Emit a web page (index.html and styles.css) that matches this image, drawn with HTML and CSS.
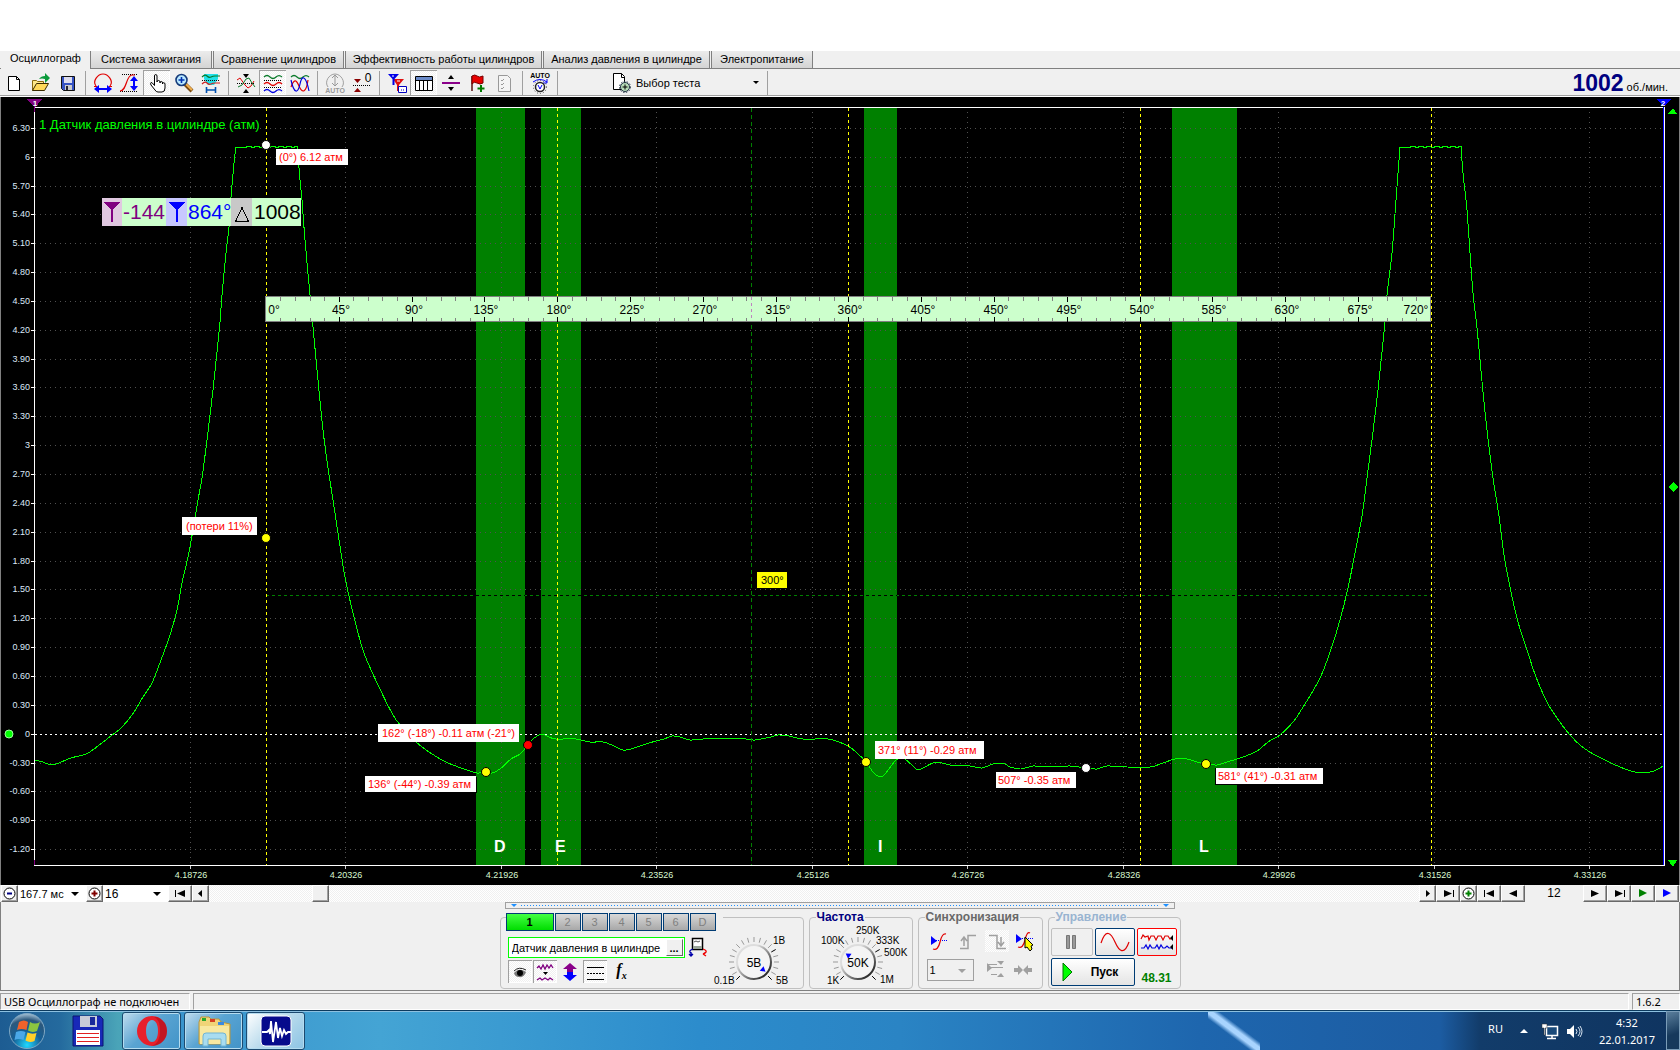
FILE: index.html
```html
<!DOCTYPE html>
<html lang="ru">
<head>
<meta charset="utf-8">
<title>USB Осциллограф</title>
<link rel="stylesheet" href="styles.css">
</head>
<body>
<div class="desktop-gap"></div>
<main class="window">
  <nav class="tabs">
    <button class="tab active" type="button">Осциллограф</button>
    <button class="tab w2" type="button">Система зажигания</button>
    <button class="tab w3" type="button">Сравнение цилиндров</button>
    <button class="tab w4" type="button">Эффективность работы цилиндров</button>
    <button class="tab w5" type="button">Анализ давления в цилиндре</button>
    <button class="tab w6" type="button">Электропитание</button>
  </nav>

  <div class="toolbar">
    <button type="button" aria-label="Новый"><svg viewBox="0 0 22 22"><path d="M5.500 4.500h8l3 3v11h-11z" fill="#fff" stroke="#000"/><path d="M13.500 4.500v3h3" fill="none" stroke="#000"/></svg></button>
    <button type="button" aria-label="Открыть"><svg viewBox="0 0 22 22"><path d="M2.500 18.500v-10h4l1 1h6v3" fill="#ffe98a" stroke="#8a6a10"/><path d="M2.500 18.500l4-7h12l-4 7z" fill="#ffd95a" stroke="#3a2a00"/><path d="M9 7q2-3 6-3V1l5 5-5 5V7q-3-1-6 0z" fill="#0a9a3a"/></svg></button>
    <button type="button" aria-label="Сохранить"><svg viewBox="0 0 22 22"><path d="M4.500 4.500h13v14h-11l-2-2z" fill="#3552c4" stroke="#111"/><path d="M7 5h8v6H7z" fill="#dde"/><path d="M8 13h7v5H8z" fill="#ccc"/><path d="M9 14h2v4H9z" fill="#223"/></svg></button>
    <i class="sep"></i>
    <button type="button" aria-label="Растянуть по горизонтали"><svg viewBox="0 0 22 22"><path d="M4 14C0 9 6 2 11 2s11 7 7 12M2 14.500h3m12 0h3" fill="none" stroke="#e00000" stroke-width="1.200"/><path d="M2 17l5-4v3h8v-3l5 4-5 4v-3H7v3z" fill="#0000ff"/></svg></button>
    <button type="button" aria-label="Растянуть по вертикали"><svg viewBox="0 0 22 22"><path d="M3 2.500h16M1 19.500h17" stroke="#000" stroke-dasharray="1 1"/><path d="M1 19c7 0 6-16 12-16h3" fill="none" stroke="#e00000" stroke-width="1.200"/><path d="M15 4l4 5h-3v5h3l-4 5-4-5h3V9h-3z" fill="#0000ff"/></svg></button>
    <button class="pressed" type="button" aria-label="Рука"><svg viewBox="0 0 22 22"><path d="M8.500 13.500V4q0-1.500 1.200-1.500T11 4v6q0-1.500 1.500-1.500T14 10v1q0-1.500 1.300-1.500T16.500 11v1q0-1.300 1.200-1.300T19 12v4q0 4-3 4h-4q-2 0-3-2l-4-5q-1-2 0-2.500t3.500 3z" fill="#fff" stroke="#000"/></svg></button>
    <button type="button" aria-label="Лупа"><svg viewBox="0 0 22 22"><path d="M12 12l7 7" stroke="#7a4a10" stroke-width="4"/><path d="M13 12l6 6" stroke="#f0b050" stroke-width="2"/><circle cx="8.500" cy="8" r="5.500" fill="#b8e8ff" stroke="#153a7a" stroke-width="1.600"/><path d="M5.500 8h6m-3-3v6" stroke="#0030b0" stroke-width="1.600"/></svg></button>
    <button type="button" aria-label="Интервал"><svg viewBox="0 0 22 22"><path d="M4 2h14v5l-4 6H8L4 7z" fill="#20e0e8"/><path d="M2 5q3-3 5-1t4 1 4-1 5 0" fill="none" stroke="#0a7a2a" stroke-width="1.200"/><path d="M2 8.500h18" stroke="#111" stroke-dasharray="1 1"/><path d="M2 12q3-3 5-1t4 1 4-1 5 0" fill="none" stroke="#d02020" stroke-width="1.200"/><path d="M6.500 15v6m9-6v6M7 18h8" stroke="#0050b0" stroke-width="1.600"/></svg></button>
    <i class="sep"></i>
    <button type="button" aria-label="Совместить"><svg viewBox="0 0 22 22"><path d="M2 11.500h18" stroke="#000" stroke-dasharray="1 1"/><path d="M2 8l3-2 5 7 3 3 3-2 3-5" fill="none" stroke="#e00000"/><path d="M3 15l4-2 4-6 3-1 3 5 3 4" fill="none" stroke="#0a7a2a"/><path d="M8 2h6l-3 4zM8 21h6l-3-4z"/></svg></button>
    <button class="pressed" type="button" aria-label="Раздельно"><svg viewBox="0 0 22 22"><g fill="none" stroke-width="1.200"><path d="M2 5q3-3 6 0t6 0 6 0" stroke="#0a7a2a"/><path d="M2 8.500h18M2 15.500h18" stroke="#000" stroke-width="1" stroke-dasharray="1 1"/><path d="M2 12q3-3 6 0t6 0 6 0" stroke="#e00000"/><path d="M2 19q3-3 6 0t6 0 6 0" stroke="#0000e0"/></g></svg></button>
    <button type="button" aria-label="Наложить"><svg viewBox="0 0 22 22"><g fill="none" stroke-width="1.200"><path d="M2 5q3-3 6 0t6 0 6 0" stroke="#0a7a2a"/><path d="M2 15C5 7 7 7 10 14s7 8 9-6" stroke="#e00000"/><path d="M2 8c3 14 7 14 9 4s6-8 9 7" stroke="#0000e0"/></g></svg></button>
    <i class="sep"></i>
    <button type="button" aria-label="Авто амплитуда"><svg viewBox="0 0 22 22"><path d="M4 15C0 10 5 2 11 2s11 8 7 13" fill="none" stroke="#a0a0a0"/><path d="M11 3v10M8 6l3-3 3 3M8 11l3 3 3-3" fill="none" stroke="#999"/><text x="11" y="21" class="tiny grey">AUTO</text></svg></button>
    <button type="button" aria-label="Ноль"><svg viewBox="0 0 22 22"><path d="M2 13.500h18" stroke="#000" stroke-dasharray="1 1"/><path d="M3 7h7l-3.500 4zM3 20h7l-3.500-4z" fill="#8a0000"/><text x="17" y="10" class="zero">0</text></svg></button>
    <i class="sep"></i>
    <button type="button" aria-label="Маркеры"><svg viewBox="0 0 22 22"><path d="M7 7h11l-5 6v6h-2v-6z" fill="#e01010"/><path d="M2 2h11L8.500 7v6h-2V7z" fill="#0000e8"/><path d="M12.500 14.500h8v6h-8z" fill="#fff" stroke="#0000c0"/><path d="M6 4h2M11 9h3" stroke="#fff"/><path d="M15 18h1m1 0h1" stroke="#0000c0"/></svg></button>
    <button class="pressed" type="button" aria-label="Таблица"><svg viewBox="0 0 22 22"><path d="M2.500 4.500h17v14h-17z" fill="#fff" stroke="#000"/><path d="M3 5h16v3H3z" fill="#6a8ac8"/><path d="M3 8.500h16M6.500 8v10m4-10v10m4-10v10" stroke="#000"/></svg></button>
    <button type="button" aria-label="Разделить"><svg viewBox="0 0 22 22"><path d="M2 11h18" stroke="#8a008a" stroke-width="2"/><path d="M8 7h6l-3-4zM8 15h6l-3 4z"/></svg></button>
    <button type="button" aria-label="Флаг"><svg viewBox="0 0 22 22"><path d="M5 4v15" stroke="#5a1010" stroke-width="1.500"/><path d="M5 4q3-2 5 0t6 0v7q-3 2-6 0t-5 1z" fill="#e80000" stroke="#700"/><path d="M14 13v7m-3.500-3.500h7" stroke="#007a00" stroke-width="2"/></svg></button>
    <button type="button" aria-label="Отчёт"><svg viewBox="0 0 22 22"><path d="M4.500 3.500h9l3 3v13h-12z" fill="#f4f4f4" stroke="#999"/><path d="M7 8l1 1 2-2M7 12l1 1 2-2M7 16l1 1 2-2" fill="none" stroke="#999"/></svg></button>
    <i class="sep"></i>
    <button type="button" aria-label="Авто напряжение"><svg viewBox="0 0 22 22"><text x="11" y="6" class="tiny">AUTO</text><path d="M4 10q7-5 14 0" fill="none" stroke="#0000ff"/><path d="M18 7v4h-4" fill="none" stroke="#0000ff"/><circle cx="11" cy="15" r="4.500" fill="#fff" stroke="#222" stroke-width="1.500"/><circle cx="11" cy="15" r="6.500" fill="none" stroke="#555" stroke-dasharray="1 2"/><path d="M9 13l2 4 2-4" fill="none" stroke="#0000ff"/></svg></button>
    <i class="sep"></i>
    <button class="test-picker" type="button"><svg viewBox="0 0 22 22"><path d="M3.500 1.500h8l3 3v13h-11z" fill="#fff" stroke="#000"/><path d="M11.500 1.500v4h3" fill="none" stroke="#000"/><circle cx="15" cy="15" r="4.500" fill="#b8dcb8" stroke="#234"/><circle cx="15" cy="15" r="5.500" fill="none" stroke="#234" stroke-dasharray="1.500 1.500"/><path d="M12.500 15h5M15 12.500v5" stroke="#000"/></svg><span>Выбор теста</span><i class="caret"></i></button>
    <i class="sep"></i>
    <p class="rpm"><strong>1002</strong> об./мин.</p>
  </div>

  <svg class="scope" id="scope" viewBox="1 97 1678 788">
    <rect x="1" y="97" width="1678" height="788" fill="#000"/>
    <g fill="#008000"><path d="M476 108h49v757h-49zM541 108h40v757h-40zM864 108h33v757h-33zM1172 108h65v757h-65z"/></g>
    <g id="grid"></g>
    <text class="chan" x="39" y="129">1 Датчик давления в цилиндре (атм)</text>
    <path d="M35 734.500H1663" stroke="#fff" stroke-dasharray="2 3"/>
    <path d="M266 595.500H1431" stroke="#008000" stroke-dasharray="3 3"/>
    <path d="M476 595.500h49M542 595.500h39M866 595.500h31M1172 595.500h65" stroke="#000" stroke-dasharray="3 3"/>
    <path class="wave" id="wave"/>
    <path d="M751.500 108V865" stroke="#008000" stroke-dasharray="4 3"/>
    <path d="M266.500 108V865M557.500 108V865M848.500 108V865M1140.500 108V865M1431.500 108V865" stroke="#ff0" stroke-dasharray="3 3"/>
    <g id="ruler"></g>

    <path d="M34 107.500H1665M34 865.500H1665M1664.500 107V866M34.500 107V866" stroke="#fff"/>
    <path d="M1663.500 107V865" stroke="#00f"/>
    <path d="M34.500 105V112M34.500 860V865" stroke="#800080"/>
    <path d="M27 99h15l-7 9z" fill="#800080"/>
    <path d="M1656 99h15l-7 8z" fill="#00f"/>
    <text class="mark" x="35" y="106">1</text>
    <text class="mark" x="1663" y="106">2</text>
    <path d="M1668 114h9l-4-6zM1668 860h9l-4 7zM1668 487l5-5 5 5-5 5z" fill="#0f0"/>
    <circle cx="9" cy="734" r="4" fill="#0f0" stroke="#9f9" stroke-width="1"/>

    <g class="phase"><text x="494" y="852">D</text><text x="555" y="852">E</text><text x="878" y="852">I</text><text x="1199" y="852">L</text></g>

    <g stroke="#000">
      <circle cx="266" cy="145" r="4.500" fill="#fff"/><circle cx="266" cy="538" r="4.500" fill="#ff0"/>
      <circle cx="486" cy="772" r="4.500" fill="#ff0"/><circle cx="528" cy="745" r="4.500" fill="#f00"/>
      <circle cx="866" cy="762" r="4.500" fill="#ff0"/><circle cx="1086" cy="768" r="4.500" fill="#fff"/>
      <circle cx="1206" cy="764" r="4.500" fill="#ff0"/>
    </g>
    <path d="M276 149h72v16h-72zM182 517h75v18h-75zM378 724h141v18H378zM365 776h111v16H365zM875 741h109v18H875zM996 772h80v16h-80zM1216 768h107v16h-107z" fill="#fff"/>
    <path d="M365 792.500h111.500v-16M1215.500 768v16.500H1237" stroke="#000" fill="none"/>
    <g class="note">
      <text x="279" y="161">(0°) 6.12 атм</text><text x="186" y="530">(потери 11%)</text>
      <text x="382" y="737">162° (-18°) -0.11 атм (-21°)</text><text x="368" y="788">136° (-44°) -0.39 атм</text>
      <text x="878" y="754">371° (11°) -0.29 атм</text><text x="998" y="784">507° -0.35 атм</text>
      <text x="1218" y="780">581° (41°) -0.31 атм</text>
    </g>
    <path d="M756.500 571.500h31v17h-31z" fill="#ff0" stroke="#000"/>
    <text class="angle" x="761" y="584">300°</text>

    <path d="M122 198h44v28h-44zM187 198h44v28h-44zM252 198h49v28h-49z" fill="#ccffcc"/>
    <path d="M102 198h20v28h-20z" fill="#e0c8e0"/><path d="M166 198h21v28h-21z" fill="#c8c8ff"/>
    <path d="M104 202h16l-7 8v12h-2v-12z" fill="#800080"/><path d="M169 202h16l-7 8v12h-2v-12z" fill="#00f"/>
    <g class="readout"><text x="123" y="219" fill="#800080">-144</text><text x="188" y="219" fill="#00f">864°</text><text x="254" y="219">1008</text></g>
    <path d="M231 198h21v28h-21z" fill="#c8c8c8"/>
    <path d="M235.500 221.500h13l-6.500-14z" fill="none" stroke="#000"/>
  </svg>

  <div class="transport">
    <button type="button" class="b17" aria-label="Уменьшить"><svg viewBox="0 0 15 15"><circle cx="7.500" cy="7.500" r="5.500" fill="#fff" stroke="#000"/><path d="M5 7.500h5" stroke="#000080" stroke-width="2"/></svg></button>
    <label class="combo c68"><select aria-label="Развёртка"><option>167.7 мс</option></select></label>
    <button type="button" class="b17" aria-label="Увеличить"><svg viewBox="0 0 15 15"><circle cx="7.500" cy="7.500" r="5.500" fill="#fff" stroke="#000"/><path d="M4.500 7.500h6m-3-3v6" stroke="#800000" stroke-width="2"/></svg></button>
    <label class="combo c65"><select aria-label="Масштаб"><option>16</option></select></label>
    <button type="button" class="b24" aria-label="В начало"><svg viewBox="0 0 15 15"><path d="M2.500 4v7" stroke="#000"/><path d="M12 4v7L4 7.500z"/></svg></button>
    <button type="button" class="b17" aria-label="Влево"><svg viewBox="0 0 15 15"><path d="M9 4v7L5 7.500z"/></svg></button>
    <input class="scroll" type="range" min="0" max="1000" value="86" aria-label="Позиция">
    <button type="button" class="b17" aria-label="Вправо"><svg viewBox="0 0 15 15"><path d="M6 4v7l4-3.500z"/></svg></button>
    <button type="button" class="b24" aria-label="В конец"><svg viewBox="0 0 15 15"><path d="M12.500 4v7" stroke="#000"/><path d="M3 4v7l8-3.500z"/></svg></button>
    <button type="button" class="b17" aria-label="Добавить"><svg viewBox="0 0 15 15"><circle cx="7.500" cy="7.500" r="5.500" fill="#fff" stroke="#000"/><path d="M4.500 7.500h6m-3-3v6" stroke="#008000" stroke-width="2"/></svg></button>
    <button type="button" class="b24" aria-label="Первый"><svg viewBox="0 0 15 15"><path d="M2.500 4v7" stroke="#000"/><path d="M12 4v7L4 7.500z"/></svg></button>
    <button type="button" class="b24" aria-label="Назад"><svg viewBox="0 0 15 15"><path d="M11 4v7L3 7.500z"/></svg></button>
    <output class="frame">12</output>
    <button type="button" class="b24" aria-label="Вперёд"><svg viewBox="0 0 15 15"><path d="M3 4v7l8-3.500z"/></svg></button>
    <button type="button" class="b24" aria-label="Последний"><svg viewBox="0 0 15 15"><path d="M12.500 4v7" stroke="#000"/><path d="M3 4v7l8-3.500z"/></svg></button>
    <button type="button" class="b24" aria-label="Играть"><svg viewBox="0 0 15 15"><path d="M3 3v8l8-4z" fill="#008000"/></svg></button>
    <button type="button" class="b24" aria-label="Играть циклом"><svg viewBox="0 0 15 15"><path d="M3 3v8l8-4z" fill="#00f"/></svg></button>
  </div>

  <section class="panel">
    <div class="splitter"><i></i><b></b><i></i></div>
    <div class="groups">
      <fieldset class="group channels">
        <div class="chan-tabs">
          <button type="button" class="on">1</button><button type="button">2</button><button type="button">3</button><button type="button">4</button><button type="button">5</button><button type="button">6</button><button type="button">D</button>
        </div>
        <div class="chan-body">
          <div class="chan-left">
            <div class="name-row">
              <div class="name-box"><input type="text" value="Датчик давления в цилиндре" aria-label="Имя канала"><button type="button">...</button></div>
              <svg class="probe" viewBox="0 0 20 20"><path d="M4.500 1.500h10v11h-10z" fill="#fff" stroke="#000" stroke-width="1.500"/><path d="M5 9h9v3H5z" fill="#9aa59a"/><path d="M6 5l2-1 2 1 2-1" fill="none" stroke="#555"/><path d="M5 12q-6 2-1 5m-1-2v4m-2-2l2 2 2-2" fill="none" stroke="#00a" stroke-width="1.300"/><path d="M15 12q6 2 1 5m-1 0l3-2m-3 2l3 2" fill="none" stroke="#e00" stroke-width="1.300"/></svg>
            </div>
            <div class="tool-row">
              <button type="button" class="pressed" aria-label="Показать"><svg viewBox="0 0 24 22"><path d="M6 12q5-6 12-1-2 6-7 5-4 0-5-4z" fill="#777"/><circle cx="12" cy="12" r="3" fill="#000"/><path d="M6 10q5-5 12-1" fill="none" stroke="#222"/></svg></button>
              <button type="button" class="pressed" aria-label="Фильтр"><svg viewBox="0 0 24 22"><path d="M4 7l2-2 2 3 2-4 2 4 2-4 2 3 2-3 2 3M4 19l3-2 2 2 3-2 3 2 2-2 3 2" fill="none" stroke="#800080" stroke-width="1.300"/><path d="M10 11h5l-2.500 3z"/></svg></button>
              <button type="button" aria-label="Сдвиг"><svg viewBox="0 0 24 22"><path d="M12 2l7 6h-4v3H9V8H5z" fill="#8a008a"/><path d="M12 20l7-6h-4v-3H9v3H5z" fill="#00f"/></svg></button>
              <button type="button" class="pressed" aria-label="Уровни"><svg viewBox="0 0 24 22"><path d="M4 6.500h17M4 18.500h17" stroke="#000"/><path d="M4 12.500h17" stroke="#000" stroke-dasharray="2 1"/></svg></button>
              <button type="button" class="fx">f<sub>x</sub></button>
            </div>
          </div>
          <svg class="knob k1" data-v="5В" data-a="40" viewBox="-43 -29 80 55"><g class="ticks"></g><text x="19" y="-18">1В</text><text x="-40" y="22">0.1В</text><text x="22" y="22">5В</text></svg>
        </div>
      </fieldset>
      <fieldset class="group freq">
        <legend>Частота</legend>
        <svg class="knob k2" data-v="50K" data-a="215" viewBox="-44 -39 94 65"><g class="ticks"></g><text x="-2" y="-28">250K</text><text x="-37" y="-18">100K</text><text x="18" y="-18">333K</text><text x="26" y="-6">500K</text><text x="-31" y="22">1K</text><text x="22" y="21">1M</text></svg>
      </fieldset>
      <fieldset class="group sync">
        <legend>Синхронизация</legend>
        <div class="sync-row">
          <svg viewBox="0 0 24 22"><path d="M4 6v9l6-4z" fill="#00f"/><path d="M5 10.500h16" stroke="#00f" stroke-dasharray="1 1"/><path d="M6 19q5 2 7-7t6-8" fill="none" stroke="#e00000" stroke-width="1.200"/></svg>
          <svg viewBox="0 0 24 22"><path d="M4 18.500h8v-13h8M8 16V8M5 11l3-4 3 4" fill="none" stroke="#a0a0a0" stroke-width="1.500"/></svg>
          <svg class="hatch" viewBox="0 0 24 22"><path d="M4 5.500h8v13h9M16 7v8M13 12l3 4 3-4" fill="none" stroke="#a0a0a0" stroke-width="1.500"/></svg>
          <svg viewBox="0 0 24 22"><path d="M2 4v9l6-4z" fill="#00f"/><path d="M2 8.500h18" stroke="#00f" stroke-dasharray="1 1"/><path d="M4 17q5 2 7-7t5-7" fill="none" stroke="#e00000" stroke-width="1.200"/><path d="M11 7v11l2-1 3 4 2-2-1-3 2-1z" fill="#ff0" stroke="#000"/></svg>
        </div>
        <div class="sync-row two">
          <label class="combo sel"><select aria-label="Канал синхронизации"><option>1</option></select></label>
          <svg viewBox="0 0 24 22"><path d="M4 4v9l5-4zM14 2h7l-3 4zM14 18h7l-3-4z" fill="#a0a0a0"/><path d="M4 5.500h10M8 8.500h12M8 15.500h6" stroke="#a0a0a0"/></svg>
          <svg viewBox="0 0 24 22"><path d="M3 9h4V6l5 5-5 5v-3H3zM21 9h-4V6l-5 5 5 5v-3h4z" fill="#a0a0a0"/></svg>
        </div>
      </fieldset>
      <fieldset class="group control">
        <legend>Управление</legend>
        <div class="ctl-grid">
          <button type="button" class="off" aria-label="Пауза"><svg viewBox="0 0 38 26"><path d="M13.500 6.500h3v13h-3zM19.500 6.500h3v13h-3z" fill="#999" stroke="#777"/></svg></button>
          <button type="button" aria-label="Синус"><svg viewBox="0 0 38 26"><path d="M5 14C10-1 15 4 19 13s9 14 14 0" fill="none" stroke="#e00000" stroke-width="1.200"/></svg></button>
          <button type="button" class="red" aria-label="Осциллограмма"><svg viewBox="0 0 38 26"><path d="M3 10l2-4 2 2 3-1 1 4 2-4h3l2 4 2-4h3l2 4 2-4h3l2 3 3-1" fill="none" stroke="#e00000" stroke-width="1.200"/><path d="M3 19h3l2-3 2 4 2-4 2 3h3l2-3 2 4 2-4 2 3h2l2-2 2 2h3" fill="none" stroke="#0000e0" stroke-width="1.200"/><path d="M35 6v6l-3-3zM35 15v6l-3-3z"/></svg></button>
          <button type="button" class="start"><svg viewBox="0 0 14 20"><path d="M2 1v18l9-9z" fill="#0f0" stroke="#070"/></svg>Пуск</button>
          <output>48.31</output>
        </div>
      </fieldset>
    </div>
  </section>
  <footer class="status"><span class="s1">USB Осциллограф не подключен</span><span class="s2"></span><span class="s3">1.6.2</span></footer>
</main>

<div class="taskbar">
  <button type="button" class="orb" aria-label="Пуск"><svg viewBox="0 0 40 38"><defs><radialGradient id="orb" cx=".5" cy=".9" r=".9"><stop offset="0" stop-color="#1fd8ff"/><stop offset=".45" stop-color="#155f96"/><stop offset=".8" stop-color="#2c587c"/><stop offset="1" stop-color="#a8c4d8"/></radialGradient></defs><circle cx="20" cy="19" r="17.500" fill="url(#orb)" stroke="#7fa8c4"/><path d="M12 10q5-3 9 0l-1.500 8q-5-2-9.500 0z" fill="#f0622a"/><path d="M23 10q5 3 10 0l-3 9q-5 2-9-.5z" fill="#8cc63f"/><path d="M9 20q5-2 9.500 0l-2 8q-5-2-9 0z" fill="#4aa8e8"/><path d="M20.500 20.500q4 2 9 .5l-2 8q-5 2-9-.5z" fill="#ffd02a"/></svg></button>
  <button type="button" class="tc" aria-label="Total Commander"><svg viewBox="0 0 34 34"><path d="M2 2h27l3 3v27H2z" fill="#1828b8" stroke="#0a1470"/><path d="M9 2h17v11H9z" fill="#c8ccd8"/><path d="M19 3h5v8h-5z" fill="#1a2a9a"/><path d="M5 16h24v15H5z" fill="#fff"/><path d="M6 19.500h22M6 23.500h22M6 27.500h22" stroke="#e02020"/></svg></button>
  <button type="button" class="task" aria-label="Opera"><svg viewBox="0 0 34 34"><path d="M17 2a15 15 0 1 0 0 30 15 15 0 0 0 0-30zm0 4c4 0 6 5 6 11s-2 11-6 11-6-5-6-11 2-11 6-11z" fill="#e8202c" fill-rule="evenodd"/><path d="M22 3q10 4 10 14t-10 14q-3 1-5 1 8-3 8-15T19 3z" fill="#a8101c" opacity=".6"/></svg></button>
  <button type="button" class="task" aria-label="Проводник"><svg viewBox="0 0 34 34"><path d="M2 8l2-5h8l2 2h8l2 3 9 2v20H2z" fill="#f0d478" stroke="#b8963c"/><path d="M5 4h4v3H5z" fill="#2aa82a"/><path d="M13 5h5v3h-5z" fill="#d84020"/><path d="M21 8h6v3h-6z" fill="#3a8ae0"/><path d="M3 12h29v18H3z" fill="#f8e8a0"/><path d="M6 32V22q0-3 3-3h17q3 0 3 3v10h-5v-7H11v7z" fill="#a8dcf0" stroke="#70b4d4"/></svg></button>
  <button type="button" class="task live" aria-label="Осциллограф"><svg viewBox="0 0 34 34"><rect x="2" y="2" width="30" height="30" rx="4" fill="#060a8c" stroke="#fff"/><path d="M3 18h5l2-2 1 4 1-13 2 21 3-20 2 16 2-10 2 8 2-6 2 4 2-2h3" fill="none" stroke="#fff" stroke-width="1.800"/></svg></button>
  <div class="tray">
    <span class="lang">RU</span>
    <svg class="t-up" viewBox="0 0 10 6"><path d="M1 5h8L5 1z" fill="#fff"/></svg>
    <svg class="t-ic" viewBox="0 0 18 18"><path d="M5.500 4.500h11v9h-11z" fill="#1a4a7a" stroke="#fff" stroke-width="1.500"/><path d="M6 16.500h9M11 14v2" stroke="#fff" stroke-width="1.500"/><path d="M1 2h5v4H4v7H3V6H1z" fill="#fff" stroke="#333" stroke-width=".5"/></svg>
    <svg class="t-ic" viewBox="0 0 18 18"><path d="M2 7h3l4-4v13l-4-4H2z" fill="#fff"/><path d="M11 7q2 2.500 0 5M13 5q4 4.500 0 9M15 4q4 5.500 0 11" fill="none" stroke="#dde8f4"/></svg>
    <time class="clock">4:32<br>22.01.2017</time>
    <button type="button" class="show" aria-label="Рабочий стол"></button>
  </div>
</div>
<script src="scope.js"></script>
</body>
</html>
```
FILE: styles.css
```css
* { box-sizing: border-box; }
body {
  margin: 0;
  height: 100vh;
  display: flex;
  flex-direction: column;
  background: #fff;
  font: 11px/16px "Liberation Sans", Arial, sans-serif;
  color: #000;
}
button, input, select { font: inherit; color: inherit; margin: 0; padding: 0; border: 0; background: none; }
svg { display: block; }
text { font-family: "Liberation Sans", Arial, sans-serif; }
.desktop-gap { flex: 0 0 51px; }
.window { flex: 1; min-height: 0; display: flex; flex-direction: column; background: #f0f0f0; }

/* page tabs */
.tabs { display: flex; height: 18px; padding-left: 1px; border-bottom: 1px solid #808080; }
.tab {
  height: 17px;
  line-height: 14px;
  padding-bottom: 2px;
  white-space: nowrap;
  background: linear-gradient(#ececec, #d4d4d4);
  border-right: 1px solid #808080;
  margin-right: 1px;
}
.tab + .tab + .tab { border-left: 1px solid #808080; }
.tab.active { width: 90px; height: 18px; background: #f0f0f0; margin: 0; padding-bottom: 4px; }
.w2 { width: 121px; }
.w3 { width: 131px; }
.w4 { width: 197px; }
.w5 { width: 167px; }
.w6 { width: 102px; }

/* toolbar */
.toolbar { display: flex; height: 28px; padding: 1px 0 0; border-bottom: 1px solid #fff; box-shadow: inset 0 -1px #a0a0a0; }
.toolbar button { width: 27px; height: 25px; display: flex; align-items: center; justify-content: center; }
.toolbar svg { width: 22px; height: 22px; }
.pressed, .toolbar .pressed {
  background: repeating-conic-gradient(#fff 0 25%, #f0f0f0 0 50%) 0 0 / 2px 2px;
  box-shadow: inset 1px 1px #a0a0a0, inset -1px -1px #fff;
}
.hatch { background: repeating-conic-gradient(#fff 0 25%, #f0f0f0 0 50%) 0 0 / 2px 2px; }
.sep { width: 8px; margin: 1px 0; background: linear-gradient(#a0a0a0, #a0a0a0) 4px 0 / 1px 100% no-repeat; }
.tiny { font-size: 7px; font-weight: bold; text-anchor: middle; }
.grey { fill: #999; }
.zero { font-size: 12px; text-anchor: middle; }
.toolbar .test-picker { width: 202px; justify-content: flex-start; padding-left: 49px; gap: 4px; }
.test-picker span { flex: 1; text-align: left; }
.caret { border: 3px solid transparent; border-top: 3px solid #000; border-bottom: 0; margin-right: 4px; }
.rpm { margin: 0 12px 0 auto; line-height: 26px; }
.rpm strong { font-size: 23px; color: #000080; }

/* oscillogram */
.scope { flex: 1 1 0; min-height: 0; width: 100%; background: #000; border: 0 solid #808080; border-width: 0 1px; shape-rendering: crispEdges; }
.scope circle { shape-rendering: auto; }
.wave { fill: none; stroke: #0f0; }
.chan { font-size: 13px; fill: #0f0; }
.mark { font-size: 8px; font-weight: bold; fill: #fff; text-anchor: middle; }
.phase { font-size: 16px; font-weight: bold; fill: #fff; }
.note { font-size: 11px; fill: #f00; }
.angle { font-size: 11px; }
.readout { font-size: 21px; }
.ylab { font-size: 9px; fill: #dce8f8; text-anchor: end; }
.xlab { font-size: 9px; fill: #d8f8d0; text-anchor: middle; }
.deg { font-size: 12px; text-anchor: middle; }

/* transport row */
.transport { flex: 0 0 17px; display: flex; padding: 0 1px; }
.transport button {
  height: 17px;
  display: flex;
  justify-content: center;
  align-items: center;
  background: #f0f0f0;
  border: 1px solid;
  border-color: #fff #696969 #696969 #fff;
  box-shadow: inset -1px -1px #a0a0a0;
}
.transport svg { width: 15px; height: 15px; flex: none; }
.b17 { width: 17px; }
.b24 { width: 24px; }
.combo { position: relative; background: #fff; }
.combo select { width: 100%; height: 100%; appearance: none; padding-left: 2px; }
.combo::after { content: ""; position: absolute; right: 7px; top: 7px; border: 4px solid transparent; border-top: 4px solid #000; border-bottom: 0; }
.c68 { width: 68px; }
.c65 { width: 65px; }
.scroll { flex: 1; min-width: 0; height: 17px; appearance: none; background: repeating-conic-gradient(#fff 0 25%, #f0f0f0 0 50%) 0 0 / 2px 2px; }
.scroll::-webkit-slider-thumb { appearance: none; width: 17px; height: 17px; background: #f0f0f0; border: 1px solid; border-color: #fff #696969 #696969 #fff; box-shadow: inset -1px -1px #a0a0a0; }
.transport select, .frame { font-size: 12px; }
.c68 select { font-size: 11px; }
.frame { width: 58px; text-align: center; }

/* control panel */
.panel { flex: 0 0 89px; border: 1px solid #808080; border-top: 0; }
.splitter { width: 670px; height: 7px; margin: 0 auto; padding: 0 5px; display: flex; align-items: center; gap: 4px; border: 1px solid #a0a0a0; }
.splitter i { border: 3px solid transparent; border-top: 3px solid #1e90ff; border-bottom: 0; }
.splitter b { flex: 1; height: 1px; background: repeating-linear-gradient(90deg, #1e90ff 0 1px, transparent 1px 3px); }
.groups { display: flex; justify-content: center; gap: 5px; padding-top: 8px; }
.group { position: relative; height: 72px; margin: 0; padding: 0; min-width: 0; border: 1px solid #c0c0c0; border-radius: 4px; }
.group legend { position: absolute; top: -9px; left: 6px; padding: 0 1px; font-size: 12px; font-weight: bold; background: #f0f0f0; }
.channels { width: 304px; }
.freq { width: 104px; }
.freq legend { color: #000080; }
.sync { width: 125px; }
.sync legend { color: #696969; }
.control { width: 133px; }
.control legend { color: #99b4d1; }
.chan-tabs { display: flex; gap: 1px; width: 217px; margin: -5px 0 0 5px; background: #f0f0f0; }
.chan-tabs button { width: 26px; height: 18px; line-height: 14px; border: 1px solid #003c74; color: #808080; background: linear-gradient(#d8d8d8, #a8a8a8); }
.chan-tabs .on { width: 48px; color: #000; font-weight: bold; background: linear-gradient(#4f4, #0d0); }
.chan-body { display: flex; justify-content: space-between; padding: 0 12px 0 7px; }
.chan-left { padding-top: 6px; }
.name-row { display: flex; gap: 3px; }
.name-box { display: flex; width: 177px; height: 21px; padding: 1px; border: 1px solid #0f0; background: #fff; }
.name-box input { flex: 1; min-width: 0; padding-left: 2px; }
.name-box button { width: 17px; line-height: 10px; font-weight: bold; background: #f0f0f0; border: 1px solid; border-color: #fff #696969 #696969 #fff; }
.probe { width: 20px; height: 20px; }
.tool-row { display: flex; gap: 1px; padding-top: 2px; }
.tool-row button { width: 24px; height: 23px; }
.tool-row svg { width: 24px; height: 22px; }
.tool-row .fx { width: 28px; font: italic bold 16px/20px "Liberation Serif", serif; }
.fx sub { font-size: 10px; }
.knob text { font-size: 10px; }
.knob .val { font-size: 12px; text-anchor: middle; }
.k1 { width: 80px; height: 55px; margin: 2px 0 0; }
.k2 { width: 94px; height: 65px; margin: 5px 0 0 4px; }
.sync-row { display: flex; gap: 5px; padding: 12px 0 0 8px; }
.sync-row svg { width: 24px; height: 22px; }
.sync-row.two { gap: 4px; padding-top: 7px; }
.sync-row .sel { width: 47px; height: 22px; border: 1px solid #a0a0a0; background: #f0f0f0; margin-right: 5px; }
.sel::after { border-top-color: #a0a0a0; top: 9px; }
.ctl-grid { display: grid; grid-template-columns: 42px 40px 40px; gap: 2px; padding: 10px 0 0 2px; }
.ctl-grid button { height: 28px; border: 1px solid #003c74; border-radius: 2px; background: linear-gradient(#fff, #e4e4e4); display: flex; align-items: center; justify-content: center; }
.ctl-grid svg { width: 38px; height: 26px; }
.ctl-grid .off { border-color: #c0c0c0; background: #f0f0f0; }
.ctl-grid .red { border-color: #f00; }
.ctl-grid .start { grid-column: span 2; font-size: 12px; font-weight: bold; gap: 16px; padding-right: 6px; }
.ctl-grid .start svg { width: 14px; height: 20px; }
.ctl-grid output { font-size: 12px; font-weight: bold; color: #008000; padding: 12px 0 0 5px; }

/* status bar */
.status { flex: 0 0 19px; display: flex; gap: 3px; padding-top: 2px; font: 11px/16px "Noto Sans", sans-serif; }
.status span { border: 1px solid; border-color: #a0a0a0 #fff #fff #a0a0a0; padding-left: 3px; line-height: 15px; white-space: nowrap; }
.s1 { width: 190px; }
.s2 { flex: 1; }
.s3 { width: 48px; }

/* task bar */
.taskbar {
  flex: 0 0 40px;
  display: flex;
  align-items: center;
  border-top: 1px solid #0c3a5e;
  box-shadow: inset 0 1px #8cc0e0;
  background:
    linear-gradient(to top right, transparent 40%, #a8d4ff 47%, #a8d4ff 53%, transparent 60%) 1208px 0 / 52px 100% no-repeat,
    linear-gradient(90deg, #1d5c92, #246a9e 60px, #4aa4b8 118px, #3a94cc 180px, #44a4d4 380px, #2c8ccc 700px, #2a84c4 900px, #1e66ae 1200px, #1c5ca2 1440px, #123c6a 1480px, #0f3460);
}
.taskbar button { display: flex; align-items: center; justify-content: center; }
.orb { width: 54px; }
.orb svg { width: 40px; height: 38px; }
.tc { width: 68px; }
.tc svg, .task svg { width: 34px; height: 34px; }
.task { width: 59px; height: 38px; margin-right: 3px; border: 1px solid #1c4a70; border-radius: 3px; background: linear-gradient(135deg, #c0dcee, #5aa4d2 45%, #4294c8); box-shadow: inset 0 0 0 1px #b4dcf0; }
.live { background: linear-gradient(135deg, #fff, #b8daec 50%, #8cc4e4); }
.tray { margin-left: auto; height: 39px; display: flex; align-items: center; color: #fff; font-family: "Noto Sans", sans-serif; }
.lang { font-size: 11px; margin-right: 16px; padding-bottom: 4px; }
.t-up { width: 10px; height: 6px; margin-right: 12px; }
.t-ic { width: 18px; height: 18px; margin-right: 6px; }
.clock { width: 78px; text-align: center; font-size: 11px; line-height: 17px; margin-left: -1px; }
.show { width: 14px; height: 39px; border: 1px solid #7a9cb8; background: linear-gradient(160deg, #5a7e9c, #16395c 60%); }
```
FILE: scope.js
```js
const NS = 'http://www.w3.org/2000/svg';
function add(parent, tag, attrs, text) {
  const el = document.createElementNS(NS, tag);
  for (const k in attrs) el.setAttribute(k, attrs[k]);
  if (text !== undefined) el.textContent = text;
  parent.appendChild(el);
}

// pressure and time axes
const grid = document.getElementById('grid');
for (let i = 0; i <= 25; i++) {
  const y = Math.floor(128.3 + 28.85 * i);
  const v = (63 - 3 * i) / 10;
  const label = Number.isInteger(v) ? String(v) : v.toFixed(2);
  if (i !== 21) add(grid, 'path', { d: `M35 ${y}.5H1663`, stroke: '#505050', 'stroke-dasharray': '1 4' });
  add(grid, 'path', { d: `M31 ${y}.5h4`, stroke: '#fff' });
  add(grid, 'text', { x: 30, y: y + 3, class: 'ylab' }, label);
}
for (let i = 0; i < 10; i++) {
  const x = Math.floor(190.4 + 155.45 * i);
  add(grid, 'path', { d: `M${x}.5 112V865`, stroke: '#505050', 'stroke-dasharray': '1 4' });
  add(grid, 'path', { d: `M${x}.5 866v3`, stroke: '#ccc' });
  add(grid, 'text', { x: x + 1, y: 878, class: 'xlab' }, (4.18726 + 0.016 * i).toFixed(5));
}

// cylinder pressure trace: each section is drawn as a smooth curve through its samples
const sections = [
  [35,760, 43,762, 48,764, 56,764, 71,758, 86,754, 94,749, 107,739, 121,728, 132,715, 143,697, 152,683, 161,660, 170,635, 177,610, 182,583, 188,557, 193,530, 198,500, 202,478, 208,432, 213,390, 217,352, 220,322, 222,295, 226,253, 229,227, 231,197, 234,163, 236,147],
  [297,146, 298,155, 300,180, 302,200, 305,240, 310,295, 313,327, 318,380, 323,430, 328,468, 333,500, 338,533, 345,577, 354,617, 364,653, 379,687, 393,715, 402,727, 416,742, 429,752, 446,762, 464,769, 477,773, 486,772, 492,773, 500,769, 511,759, 520,754, 528,745, 533,739, 542,734, 549,737, 556,739, 576,739, 590,742, 603,742, 614,746, 623,750, 631,749, 646,744, 656,741, 664,739, 672,736, 680,737, 690,740, 703,739, 724,738, 746,739, 755,740, 771,737, 778,735, 789,736, 803,739, 828,739, 839,742, 848,746, 856,752, 866,762, 873,772, 878,776, 883,776, 892,765, 896,760, 903,758, 913,766, 918,770, 925,767, 933,763, 942,763, 950,765, 970,766, 982,768, 993,764, 1005,764, 1010,767, 1021,769, 1033,766, 1047,767, 1070,766, 1086,768, 1097,769, 1107,766, 1127,767, 1150,767, 1163,763, 1175,759, 1187,759, 1197,762, 1206,764, 1217,765, 1227,762, 1243,757, 1257,751, 1268,742, 1280,735, 1293,722, 1300,712, 1320,678, 1332,646, 1340,620, 1348,588, 1355,553, 1362,516, 1367,478, 1373,432, 1378,390, 1382,352, 1385,322, 1387,295, 1392,253, 1396,200, 1400,147],
  [1461,146, 1463,173, 1467,210, 1470,253, 1473,293, 1477,328, 1480,360, 1484,402, 1488,439, 1493,478, 1499,516, 1504,555, 1511,592, 1518,622, 1527,650, 1536,677, 1548,704, 1562,725, 1570,735, 1580,745, 1593,754, 1607,761, 1620,767, 1635,772, 1650,772, 1658,769, 1663,766]
];
// clipped top of a pressure peak, with one-pixel ripple
function plateau(from, to) {
  let d = '';
  for (let x = from; x < to; x += 8) d += `H${Math.min(x + 5, to)}V147H${Math.min(x + 8, to)}V146`;
  return d;
}
function smooth(p) {
  let d = `L${p[0]} ${p[1]}`;
  const n = p.length / 2;
  const at = i => { const k = Math.max(0, Math.min(n - 1, i)) * 2; return [p[k], p[k + 1]]; };
  for (let i = 0; i < n - 1; i++) {
    const [a, b, c, e] = [at(i - 1), at(i), at(i + 1), at(i + 2)];
    d += `C${b[0] + (c[0] - a[0]) / 6} ${b[1] + (c[1] - a[1]) / 6} ${c[0] - (e[0] - b[0]) / 6} ${c[1] - (e[1] - b[1]) / 6} ${c[0]} ${c[1]}`;
  }
  return d;
}
document.getElementById('wave').setAttribute('d',
  'M35 760' + smooth(sections[0]) + plateau(238, 297) + smooth(sections[1]) + plateau(1402, 1461) + smooth(sections[2]));

// crank angle ruler
const ruler = document.getElementById('ruler');
add(ruler, 'rect', { x: 265.5, y: 296.5, width: 1165, height: 25, fill: '#ccffcc', stroke: '#808080' });
add(ruler, 'path', { d: 'M751.5 297V321', stroke: '#c080c0', 'stroke-dasharray': '3 3' });
for (let i = 0; i <= 80; i++) {
  const x = Math.floor(266.4 + 14.56 * i);
  const major = i % 5 === 0;
  if (i > 0 && i < 80) {
    const n = major ? 5 : 4;
    add(ruler, 'path', { d: `M${x}.5 297v${n}M${x}.5 ${321 - n + 1}v${n}`, stroke: major ? '#000' : '#808080' });
  }
  if (major) {
    const lx = i === 0 ? 274 : i === 80 ? 1416 : x + 2;
    add(ruler, 'text', { x: lx, y: 314, class: 'deg' }, i * 9 + '°');
  }
}

// rotary knobs
for (const knob of document.querySelectorAll('.knob')) {
  const ticks = knob.querySelector('.ticks');
  for (let a = 0; a <= 270; a += 15) {
    const r = (135 + a) * Math.PI / 180;
    const c = Math.cos(r), s = Math.sin(r);
    add(ticks, 'path', {
      d: `M${(c * 20).toFixed(1)} ${(s * 20).toFixed(1)}L${(c * 25).toFixed(1)} ${(s * 25).toFixed(1)}`,
      stroke: [0, 270].includes(a) || a === 195 ? '#000' : '#999'
    });
  }
  const defs = `<linearGradient id="rim" x1="0" y1="0" x2="1" y2="1"><stop offset=".3" stop-color="#ddd"/><stop offset="1" stop-color="#000"/></linearGradient>`;
  ticks.insertAdjacentHTML('beforeend', defs);
  add(ticks, 'circle', { r: 17, fill: '#f4f4f4', stroke: 'url(#rim)', 'stroke-width': 2 });
  add(ticks, 'path', { d: 'M10 -3l5 3-5 3z', fill: '#00f', transform: `rotate(${knob.dataset.a})` });
  add(knob, 'text', { x: 0, y: 5, class: 'val' }, knob.dataset.v);
}
```
